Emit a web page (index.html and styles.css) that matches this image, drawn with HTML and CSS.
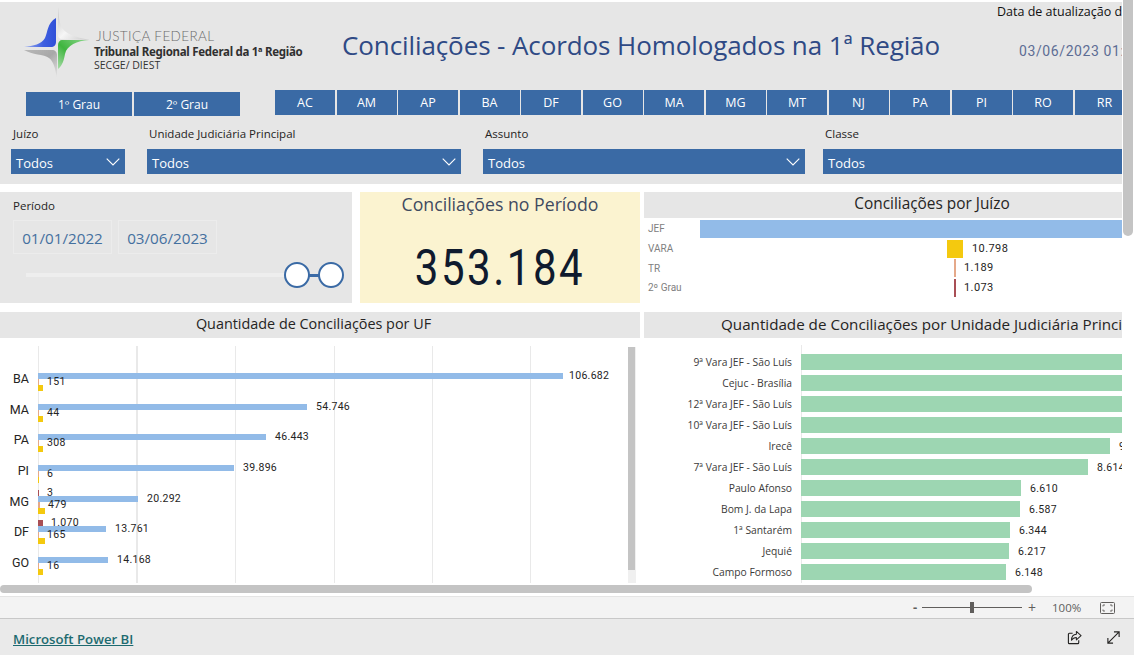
FILE: index.html
```html
<!DOCTYPE html>
<html lang="pt-BR">
<head>
<meta charset="utf-8">
<title>Conciliações - Acordos Homologados na 1ª Região</title>
<link rel="stylesheet" href="styles.css">
</head>
<body>
<div class="viewer">
  <main class="canvas">
    <div class="report">
      <header class="band">
        <div class="top">
          <svg class="logo" viewBox="20 2 75 80" width="75" height="80" aria-hidden="true">
            <defs>
              <linearGradient id="gb" x1="0" y1="0" x2="1" y2="0"><stop offset="0" stop-color="#9db0f0"/><stop offset=".6" stop-color="#3f5fe0"/><stop offset="1" stop-color="#2f50d8"/></linearGradient>
              <linearGradient id="gg" x1="0" y1="1" x2="1" y2="0"><stop offset="0" stop-color="#a8dca8"/><stop offset=".45" stop-color="#3fb53f"/><stop offset="1" stop-color="#8fd88f"/></linearGradient>
              <linearGradient id="gt" x1="0" y1="0" x2="1" y2="1"><stop offset="0" stop-color="#c0c0c0"/><stop offset=".5" stop-color="#f6f6f6"/><stop offset="1" stop-color="#c8c8c8"/></linearGradient>
              <linearGradient id="gd" x1="1" y1="1" x2="0" y2="0"><stop offset="0" stop-color="#e6e6e6"/><stop offset=".5" stop-color="#a8a8a8"/><stop offset="1" stop-color="#b8b8b8"/></linearGradient>
            </defs>
            <path fill="url(#gt)" d="M58 7C59 20 60 28 66 32C72 36 80 38 90 40L62 39C59 39 58 37 58 35Z"/>
            <path fill="url(#gb)" d="M56 18L56 42C56 45 54 47 51 47L24 47C33 46 42 44 45 38C48 32 47 23 56 18Z"/>
            <path fill="url(#gg)" d="M89 40L62 40C60 40 58 42 58 45L58 69C63 65 64 59 65 54C67 45 77 41 89 40Z"/>
            <path fill="url(#gd)" d="M24 50L52 50C55 50 57 52 57 55L57 78C55 68 54 62 49 58C44 54 32 55 24 50Z"/>
          </svg>
          <div class="org">
            <div class="org-a">JUSTIÇA FEDERAL</div>
            <div class="org-b">Tribunal Regional Federal da 1ª Região</div>
            <div class="org-c">SECGE/ DIEST</div>
          </div>
          <h1 class="title">Conciliações - Acordos Homologados na 1ª Região</h1>
          <div class="update">
            <div class="update-label">Data de atualização dos dados</div>
            <div class="update-date">03/06/2023 01:30:00</div>
          </div>
        </div>
        <div class="tabs">
          <div class="grades">
            <div class="btn btn-grade">1º Grau</div>
            <div class="btn btn-grade">2º Grau</div>
          </div>
          <div class="states">
            <div class="btn btn-state">AC</div><div class="btn btn-state">AM</div><div class="btn btn-state">AP</div><div class="btn btn-state">BA</div><div class="btn btn-state">DF</div><div class="btn btn-state">GO</div><div class="btn btn-state">MA</div><div class="btn btn-state">MG</div><div class="btn btn-state">MT</div><div class="btn btn-state">NJ</div><div class="btn btn-state">PA</div><div class="btn btn-state">PI</div><div class="btn btn-state">RO</div><div class="btn btn-state">RR</div>
          </div>
        </div>
        <div class="filters">
          <div class="filter f1"><label>Juízo</label><div class="select"><span>Todos</span><svg viewBox="0 0 14 8" width="14" height="8"><path d="M.7.7 7 7l6.3-6.3" fill="none" stroke="#fff" stroke-width="1.1"/></svg></div></div>
          <div class="filter f2"><label>Unidade Judiciária Principal</label><div class="select"><span>Todos</span><svg viewBox="0 0 14 8" width="14" height="8"><path d="M.7.7 7 7l6.3-6.3" fill="none" stroke="#fff" stroke-width="1.1"/></svg></div></div>
          <div class="filter f3"><label>Assunto</label><div class="select"><span>Todos</span><svg viewBox="0 0 14 8" width="14" height="8"><path d="M.7.7 7 7l6.3-6.3" fill="none" stroke="#fff" stroke-width="1.1"/></svg></div></div>
          <div class="filter f4"><label>Classe</label><div class="select"><span>Todos</span></div></div>
        </div>
      </header>

      <section class="mid">
        <div class="period">
          <div class="period-label">Período</div>
          <div class="dates"><div class="date">01/01/2022</div><div class="date">03/06/2023</div></div>
          <div class="slider">
            <span class="handle h1"></span><span class="link"></span><span class="handle h2"></span>
          </div>
        </div>
        <div class="kpi">
          <div class="kpi-title">Conciliações no Período</div>
          <div class="kpi-value">353.184</div>
        </div>
        <div class="juizo">
          <h2 class="chart-title title-juizo">Conciliações por Juízo</h2>
          <div class="funnel">
            <div class="f-row"><span class="f-label">JEF</span><div class="f-track"><div class="f-bar blue" style="width:510px"></div></div></div>
            <div class="f-row"><span class="f-label">VARA</span><div class="f-track"><div class="f-bar yellow" style="width:16px"><span class="f-val">10.798</span></div></div></div>
            <div class="f-row"><span class="f-label">TR</span><div class="f-track"><div class="f-bar orange" style="width:2px"><span class="f-val near">1.189</span></div></div></div>
            <div class="f-row"><span class="f-label">2º Grau</span><div class="f-track"><div class="f-bar red" style="width:2px"><span class="f-val near">1.073</span></div></div></div>
          </div>
        </div>
      </section>

      <section class="bottom">
        <div class="uf">
          <h2 class="chart-title title-uf">Quantidade de Conciliações por UF</h2>
          <div class="uf-body">
            <div class="uf-plot">
              <div class="group"><span class="uf-name">BA</span><div class="bars">
                <div class="b"></div>
                <div class="b"><i class="blue" style="width:525px"></i><span class="v vb">106.682</span></div>
                <div class="b"><i class="orange" style="width:1px"></i><span class="v">151</span></div>
                <div class="b"><i class="yellow" style="width:5px"></i></div>
              </div></div>
              <div class="group"><span class="uf-name">MA</span><div class="bars">
                <div class="b"></div>
                <div class="b"><i class="blue" style="width:269px"></i><span class="v vb">54.746</span></div>
                <div class="b"><i class="orange" style="width:1px"></i><span class="v">44</span></div>
                <div class="b"><i class="yellow" style="width:5px"></i></div>
              </div></div>
              <div class="group"><span class="uf-name">PA</span><div class="bars">
                <div class="b"></div>
                <div class="b"><i class="blue" style="width:228px"></i><span class="v vb">46.443</span></div>
                <div class="b"><i class="orange" style="width:1px"></i><span class="v">308</span></div>
                <div class="b"><i class="yellow" style="width:5px"></i></div>
              </div></div>
              <div class="group"><span class="uf-name">PI</span><div class="bars">
                <div class="b"></div>
                <div class="b"><i class="blue" style="width:196px"></i><span class="v vb">39.896</span></div>
                <div class="b"><i class="orange" style="width:1px"></i><span class="v">6</span></div>
                <div class="b"><i class="yellow" style="width:1px"></i></div>
              </div></div>
              <div class="group"><span class="uf-name">MG</span><div class="bars">
                <div class="b"><i class="red" style="width:1px"></i><span class="v">3</span></div>
                <div class="b"><i class="blue" style="width:100px"></i><span class="v vb">20.292</span></div>
                <div class="b"><i class="orange" style="width:2px"></i><span class="v">479</span></div>
                <div class="b"><i class="yellow" style="width:7px"></i></div>
              </div></div>
              <div class="group"><span class="uf-name">DF</span><div class="bars">
                <div class="b"><i class="red" style="width:5px"></i><span class="v">1.070</span></div>
                <div class="b"><i class="blue" style="width:68px"></i><span class="v vb">13.761</span></div>
                <div class="b"><i class="orange" style="width:1px"></i><span class="v">165</span></div>
                <div class="b"><i class="yellow" style="width:7px"></i></div>
              </div></div>
              <div class="group"><span class="uf-name">GO</span><div class="bars">
                <div class="b"></div>
                <div class="b"><i class="blue" style="width:70px"></i><span class="v vb">14.168</span></div>
                <div class="b"><i class="orange" style="width:1px"></i><span class="v">16</span></div>
                <div class="b"><i class="yellow" style="width:5px"></i></div>
              </div></div>
            </div>
            <div class="inner-scroll"><span></span></div>
          </div>
        </div>
        <div class="unidade">
          <h2 class="chart-title title-un">Quantidade de Conciliações por Unidade Judiciária Principal</h2>
          <div class="u-body">
            <div class="u-row"><span class="u-name">9ª Vara JEF - São Luís</span><div class="u-bar" style="width:340px"></div><span class="u-val">12.345</span></div>
            <div class="u-row"><span class="u-name">Cejuc - Brasília</span><div class="u-bar" style="width:340px"></div><span class="u-val">11.890</span></div>
            <div class="u-row"><span class="u-name">12ª Vara JEF - São Luís</span><div class="u-bar" style="width:340px"></div><span class="u-val">10.912</span></div>
            <div class="u-row"><span class="u-name">10ª Vara JEF - São Luís</span><div class="u-bar" style="width:340px"></div><span class="u-val">10.204</span></div>
            <div class="u-row"><span class="u-name">Irecê</span><div class="u-bar" style="width:309px"></div><span class="u-val">9.102</span></div>
            <div class="u-row"><span class="u-name">7ª Vara JEF - São Luís</span><div class="u-bar" style="width:287px"></div><span class="u-val">8.614</span></div>
            <div class="u-row"><span class="u-name">Paulo Afonso</span><div class="u-bar" style="width:220px"></div><span class="u-val">6.610</span></div>
            <div class="u-row"><span class="u-name">Bom J. da Lapa</span><div class="u-bar" style="width:219px"></div><span class="u-val">6.587</span></div>
            <div class="u-row"><span class="u-name">1ª Santarém</span><div class="u-bar" style="width:209px"></div><span class="u-val">6.344</span></div>
            <div class="u-row"><span class="u-name">Jequié</span><div class="u-bar" style="width:208px"></div><span class="u-val">6.217</span></div>
            <div class="u-row"><span class="u-name">Campo Formoso</span><div class="u-bar" style="width:205px"></div><span class="u-val">6.148</span></div>
          </div>
        </div>
      </section>
    </div>
    <div class="hscroll"></div>
    <div class="vscroll"></div>
  </main>

  <div class="status">
    <span class="zoom-sign">-</span>
    <div class="zoom-track"><span class="zoom-thumb"></span></div>
    <span class="zoom-sign plus">+</span>
    <span class="zoom-pct">100%</span>
    <svg class="fit" viewBox="0 0 15 12" width="15" height="12" aria-hidden="true"><rect x=".5" y=".5" width="14" height="11" rx="1" fill="none" stroke="#605e5c"/><path d="M3 4.500V3h2M10 3h2v1.500M12 7.500V9h-2M5 9H3V7.500" fill="none" stroke="#605e5c" stroke-width=".9"/></svg>
  </div>
  <footer class="footer">
    <a class="pbi" href="#">Microsoft Power BI</a>
    <div class="foot-icons">
      <svg viewBox="0 0 16 16" width="15" height="15" aria-hidden="true"><path d="M6 3.500H2.500a1 1 0 0 0-1 1v9a1 1 0 0 0 1 1h9a1 1 0 0 0 1-1V11" fill="none" stroke="#252423" stroke-width="1.200"/><path d="M10 1.500 15 6l-5 4.500V8C7.500 8 6 9 4.800 11c0-4 1.800-6.300 5.200-6.500Z" fill="none" stroke="#252423" stroke-width="1.100" stroke-linejoin="round"/></svg>
      <svg viewBox="0 0 16 16" width="15" height="15" aria-hidden="true"><path d="M2 14 14 2M8.500 2H14v5.500M2 8.500V14h5.500" fill="none" stroke="#252423" stroke-width="1.200"/></svg>
    </div>
  </footer>
</div>
</body>
</html>
```
FILE: styles.css
```css
* { box-sizing: border-box; }
html, body { margin: 0; padding: 0; height: 100%; overflow: hidden; background: #fff; }
body { font-family: "Open Sans", "Noto Sans", sans-serif; color: #252423; }

.viewer { width: 1134px; height: 655px; display: flex; flex-direction: column; overflow: hidden; }
.canvas { position: relative; height: 596px; padding-top: 2px; overflow: hidden; background: #fff; flex: none; }
.report { width: 1122px; height: 594px; overflow: hidden; }

/* header band */
.band { height: 182px; background: #e6e6e6; display: flex; flex-direction: column; }
.top { height: 88px; display: grid; grid-template-columns: 94px 248px 655px 125px; align-items: start; flex: none; }
.logo { margin: 0 0 0 20px; display: block; }
.org { padding-top: 27px; }
.org-a { font-size: 13.500px; line-height: 15px; color: #6b6b6b; font-family: "Lato", sans-serif; font-weight: 300; letter-spacing: .4px; margin-left: 2px; }
.org-b { font-size: 11.500px; line-height: 15px; font-weight: 700; color: #303030; white-space: nowrap; font-family: "Noto Sans", sans-serif; letter-spacing: -.28px; }
.org-c { font-size: 10.500px; line-height: 13px; color: #333; }
.title { margin: 25px 0 0; font-size: 26px; line-height: 36px; font-weight: 400; color: #2f4a85; white-space: nowrap; letter-spacing: -.1px; }
.update { overflow: hidden; white-space: nowrap; }
.update-label { font-size: 12.500px; line-height: 18px; color: #111; margin-top: 1px; }
.update-date { font-family: "Roboto", sans-serif; font-size: 14px; line-height: 18px; color: #5d6d94; margin: 21px 0 0 22px; letter-spacing: .6px; }

.tabs { display: flex; height: 28px; flex: none; }
.grades { display: flex; gap: 2px; margin: 2px 0 0 26px; width: 249px; flex: none; }
.states { display: flex; gap: 1.500px; flex: none; }
.btn { background: #3a6aa5; color: #fff; display: flex; align-items: center; justify-content: center; font-size: 12px; flex: none; }
.btn-grade { width: 106px; height: 24px; }
.btn-state { width: 60px; height: 25px; font-size: 12.500px; }

.filters { display: flex; margin-top: 8px; padding-left: 11px; }
.filter label { display: block; font-size: 11.500px; line-height: 16px; padding-left: 2px; color: #252423; }
.select { margin-top: 7px; height: 25px; background: #3a6aa5; color: #fff; display: flex; align-items: center; justify-content: space-between; padding: 2px 5px 0; font-size: 13px; }
.select svg { margin: -2px 0 0; }
.f1 { width: 114px; margin-right: 22px; flex: none; }
.f2 { width: 314px; margin-right: 22px; flex: none; }
.f3 { width: 322px; margin-right: 18px; flex: none; }
.f4 { width: 299px; flex: none; }

/* middle row */
.mid { display: flex; height: 111px; margin-top: 8px; }
.period { width: 352px; background: #e6e6e6; padding: 5px 13px 0; position: relative; flex: none; }
.period-label { font-size: 11.500px; line-height: 17px; }
.dates { display: flex; gap: 6px; margin-top: 6px; }
.date { width: 99px; height: 34px; border: 1px solid #ececec; color: #44709f; font-size: 15.200px; padding-top: 1px; display: flex; align-items: center; justify-content: center; }
.slider { height: 4px; background: #eeeeee; margin: 19px 0 0 13px; width: 274px; }
.handle { position: absolute; top: 70px; width: 26px; height: 26px; border-radius: 50%; background: #fff; border: 2.500px solid #3a6aa5; }
.h1 { left: 284px; }
.h2 { left: 318px; }
.link { position: absolute; top: 81.500px; left: 309px; width: 10px; height: 3px; background: #3a6aa5; }

.kpi { width: 280px; margin-left: 8px; background: #fbf3d0; text-align: center; flex: none; }
.kpi-title { font-size: 17.700px; line-height: 24px; color: #3f4a60; }
.kpi-value { font-family: "Roboto", sans-serif; font-size: 50px; line-height: 54px; margin-top: 25px; color: #0f1a2e; letter-spacing: 3px; transform: scaleX(.84); }

.juizo { width: 478px; margin-left: 4px; overflow: hidden; flex: none; }
.chart-title { margin: 0; height: 26px; background: #e6e6e6; font-size: 14.500px; line-height: 24px; font-weight: 400; text-align: center; color: #252423; white-space: nowrap; overflow: hidden; }
.title-juizo { font-size: 15.400px; padding-left: 98px; }
.title-uf { font-size: 14.400px; padding-right: 13px; }
.title-un { font-size: 15.200px; text-align: left; padding-left: 77px; }
.funnel { padding-top: 1px; }
.f-row { display: flex; height: 19.700px; font-family: "Roboto", sans-serif; align-items: center; }
.f-label { width: 56px; padding-left: 4px; font-size: 10px; color: #808080; flex: none; }
.f-track { width: 510px; height: 18px; display: flex; justify-content: center; flex: none; }
.f-bar { height: 18px; position: relative; flex: none; }
.f-val { position: absolute; left: 25px; top: 0; font-size: 11px; line-height: 18px; color: #252423; letter-spacing: .4px; white-space: nowrap; }
.f-val.near { left: 10px; }

.blue { background: #92bbe8; }
.yellow { background: #f4c90f; }
.orange { background: #e5a98a; }
.red { background: #a94f55; }

/* bottom row */
.bottom { display: flex; margin-top: 9px; gap: 4px; height: 273px; }
.uf { width: 640px; flex: none; }
.uf-body { display: flex; height: 247px; }
.uf-plot { width: 628px; padding-top: 29px; height: 245px; background-image: repeating-linear-gradient(90deg, #e9e9e9 0 1px, transparent 1px 98.500px); background-position: 38px 8px; background-repeat: no-repeat; background-size: 590px 237px; flex: none; }
.group { display: flex; height: 30.700px; }
.uf-name { width: 38px; padding-right: 9px; text-align: right; font-size: 12.500px; line-height: 24px; color: #252423; font-family: "Roboto", sans-serif; flex: none; }
.bars { display: flex; flex-direction: column; }
.b { height: 6px; display: flex; align-items: stretch; flex: none; }
.b i { display: block; flex: none; }
.v { font-family: "Roboto", sans-serif; font-size: 10.500px; line-height: 6px; color: #252423; margin-left: 8px; letter-spacing: .3px; white-space: nowrap; }
.v.vb { margin-left: 9px; }
.group:first-child .v.vb { margin-left: 6px; }
.inner-scroll { width: 8px; margin: 9px 0 0; height: 236px; background: #f0f0f0; }
.inner-scroll span { display: block; width: 7px; height: 223px; background: #c4c4c4; }

.unidade { width: 478px; overflow: hidden; flex: none; }
.u-body { position: relative; margin-left: 157px; padding-top: 13px; height: 245px; background: linear-gradient(#e9e9e9, #e9e9e9) 0 7px / 1px 238px no-repeat; }
.u-row { display: flex; align-items: center; height: 21.060px; position: relative; }
.u-name { position: absolute; right: 330px; width: 150px; text-align: right; font-size: 10.300px; white-space: nowrap; color: #3b3a39; }
.u-bar { height: 16px; background: #9dd6b2; flex: none; }
.u-val { font-family: "Roboto", sans-serif; font-size: 10.500px; padding-top: 2px; color: #252423; margin-left: 9px; letter-spacing: .3px; white-space: nowrap; }

/* scrollbars overlay */
.hscroll { position: absolute; left: 0; top: 585px; width: 1032px; height: 8px; border-radius: 4px; background: #c4c4c4; }
.vscroll { position: absolute; left: 1123px; top: 0; width: 10px; height: 236px; border-radius: 0 0 5px 5px; background: #c4c4c4; }

/* status + footer */
.status { height: 23px; background: #f3f3f3; border-top: 1px solid #e4e4e4; border-bottom: 1px solid #c8c8c8; display: flex; align-items: center; padding-left: 913px; flex: none; font-size: 11.500px; color: #605e5c; }
.zoom-sign { width: 9px; font-weight: 700; font-size: 13px; line-height: 13px; }
.zoom-sign.plus { font-weight: 400; font-size: 14px; width: 20px; margin-left: 6px; }
.zoom-track { width: 100px; height: 1px; background: #605e5c; position: relative; }
.zoom-thumb { position: absolute; left: 48px; top: -5px; width: 4px; height: 11px; background: #605e5c; }
.zoom-pct { width: 48px; margin-left: 4px; }
.fit { display: block; }
.footer { flex: 1; background: #eaeaea; display: flex; align-items: center; justify-content: space-between; padding: 0 13px; }
.pbi { font-size: 13.200px; font-weight: 600; color: #1d6a70; padding-top: 3px; }
.foot-icons { display: flex; gap: 24px; }
.foot-icons svg { display: block; }
```
